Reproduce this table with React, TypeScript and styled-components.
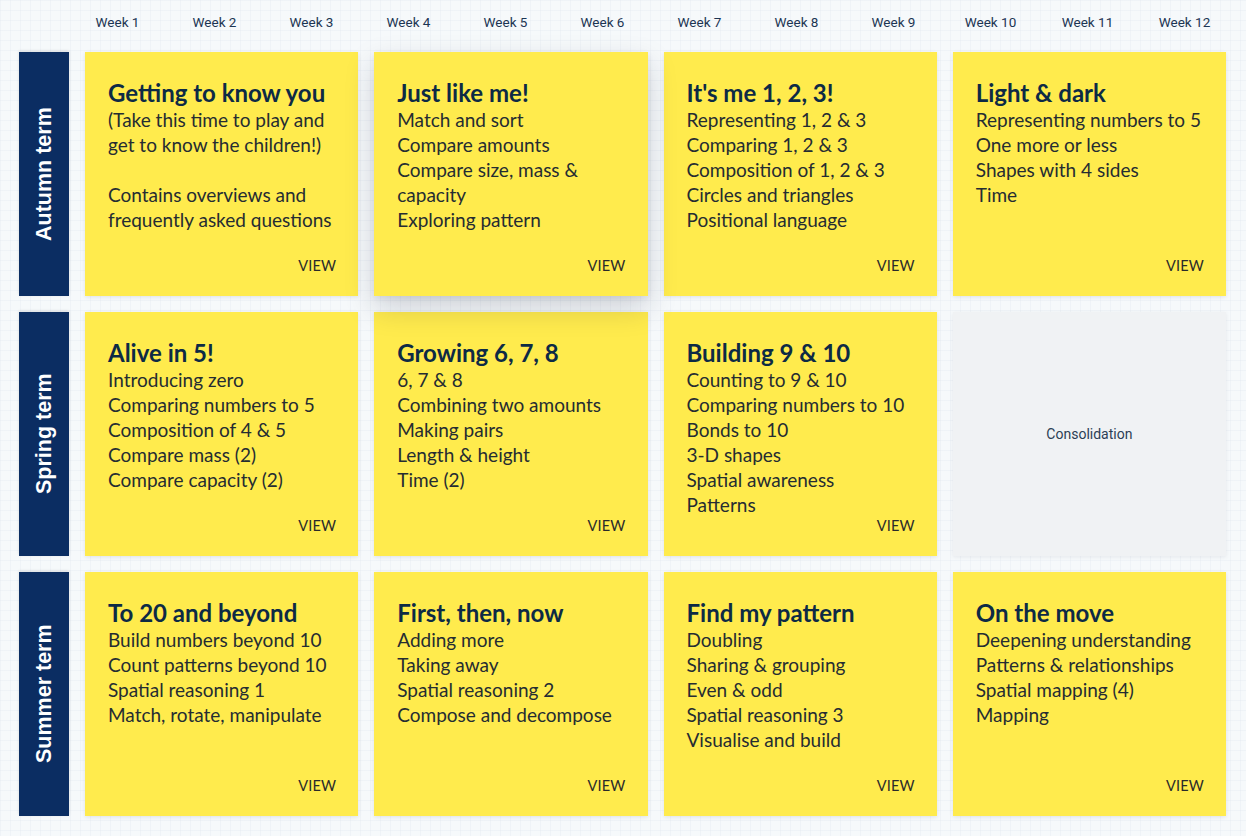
import React from "react";
import styled, { createGlobalStyle } from "styled-components";

const Global = createGlobalStyle`
  html, body { margin: 0; padding: 0; }
  body {
    background-color: #f6f9fb;
    background-image:
      linear-gradient(to right, rgba(214, 224, 234, 0.22) 1px, transparent 1px),
      linear-gradient(to bottom, rgba(214, 224, 234, 0.22) 1px, transparent 1px);
    background-size: 10px 10px;
    font-family: "Lato", "Liberation Sans", sans-serif;
  }
`;

const Page = styled.div`
  width: 1246px;
  height: 836px;
  box-sizing: border-box;
  padding: 0 20px 0 0;
`;

const WeekHeader = styled.div`
  display: grid;
  grid-template-columns: 69px repeat(12, 97px);
  height: 44px;
  align-items: center;
`;

const WeekLabel = styled.div`
  text-align: center;
  font-family: "Roboto", "Liberation Sans", sans-serif;
  font-size: 13.5px;
  color: #1c3553;
`;

const Board = styled.div`
  display: grid;
  grid-template-columns: 50px repeat(4, 1fr);
  grid-auto-rows: 244px;
  gap: 16px;
  padding: 8px 0 0 19px;
`;

const TermLabel = styled.div`
  background: #0b2d62;
  color: #ffffff;
  display: flex;
  align-items: center;
  justify-content: center;
  font-family: "Liberation Sans", "Roboto", sans-serif;
  font-weight: 700;
  font-size: 21.5px;
  writing-mode: vertical-rl;
  transform: rotate(180deg);
  box-shadow: 0 1px 3px rgba(0, 0, 0, 0.12);
`;

const Card = styled.div<{ $raised?: boolean }>`
  background: #ffeb4d;
  display: flex;
  flex-direction: column;
  box-sizing: border-box;
  padding: 27px 22px 21px 23px;
  box-shadow: ${(p) =>
    p.$raised
      ? "0 12px 28px rgba(20, 30, 50, 0.18), 0 2px 6px rgba(20,30,50,0.08)"
      : "0 1px 4px rgba(20, 30, 50, 0.10)"};
  position: relative;
  z-index: ${(p) => (p.$raised ? 2 : 1)};
`;

const Title = styled.div`
  font-family: "Lato", sans-serif;
  font-weight: 700;
  font-size: 24px;
  line-height: 28px;
  color: #0d2a45;
  white-space: nowrap;
`;

const Line = styled.div`
  font-family: "Lato", sans-serif;
  font-weight: 400;
  font-size: 19px;
  line-height: 25px;
  color: #252c32;
  white-space: nowrap;
  min-height: 25px;
`;

const View = styled.div`
  margin-top: auto;
  align-self: flex-end;
  font-family: "Lato", sans-serif;
  font-size: 14.5px;
  line-height: 18px;
  color: #2a2a2a;
  letter-spacing: 0.2px;
`;

const EmptyCard = styled.div`
  background: #f0f2f4;
  display: flex;
  align-items: center;
  justify-content: center;
  font-family: "Roboto", "Liberation Sans", sans-serif;
  font-size: 14px;
  color: #2c3e55;
  box-shadow: 0 1px 4px rgba(20, 30, 50, 0.08);
`;

type Unit = { title?: string; lines?: string[]; raised?: boolean; empty?: string };

const terms: { name: string; units: Unit[] }[] = [
  {
    name: "Autumn term",
    units: [
      {
        title: "Getting to know you",
        lines: [
          "(Take this time to play and",
          "get to know the children!)",
          "",
          "Contains overviews and",
          "frequently asked questions",
        ],
      },
      {
        title: "Just like me!",
        lines: ["Match and sort", "Compare amounts", "Compare size, mass &", "capacity", "Exploring pattern"],
        raised: true,
      },
      {
        title: "It's me 1, 2, 3!",
        lines: [
          "Representing 1, 2 & 3",
          "Comparing 1, 2 & 3",
          "Composition of 1, 2 & 3",
          "Circles and triangles",
          "Positional language",
        ],
      },
      {
        title: "Light & dark",
        lines: ["Representing numbers to 5", "One more or less", "Shapes with 4 sides", "Time"],
      },
    ],
  },
  {
    name: "Spring term",
    units: [
      {
        title: "Alive in 5!",
        lines: [
          "Introducing zero",
          "Comparing numbers to 5",
          "Composition of 4 & 5",
          "Compare mass (2)",
          "Compare capacity (2)",
        ],
      },
      {
        title: "Growing 6, 7, 8",
        lines: ["6, 7 & 8", "Combining two amounts", "Making pairs", "Length & height", "Time (2)"],
      },
      {
        title: "Building 9 & 10",
        lines: [
          "Counting to 9 & 10",
          "Comparing numbers to 10",
          "Bonds to 10",
          "3-D shapes",
          "Spatial awareness",
          "Patterns",
        ],
      },
      { empty: "Consolidation" },
    ],
  },
  {
    name: "Summer term",
    units: [
      {
        title: "To 20 and beyond",
        lines: [
          "Build numbers beyond 10",
          "Count patterns beyond 10",
          "Spatial reasoning 1",
          "Match, rotate, manipulate",
        ],
      },
      {
        title: "First, then, now",
        lines: ["Adding more", "Taking away", "Spatial reasoning 2", "Compose and decompose"],
      },
      {
        title: "Find my pattern",
        lines: ["Doubling", "Sharing & grouping", "Even & odd", "Spatial reasoning 3", "Visualise and build"],
      },
      {
        title: "On the move",
        lines: ["Deepening understanding", "Patterns & relationships", "Spatial mapping (4)", "Mapping"],
      },
    ],
  },
];

export default function App() {
  return (
    <Page>
      <Global />
      <WeekHeader>
        <div />
        {Array.from({ length: 12 }, (_, i) => (
          <WeekLabel key={i}>Week {i + 1}</WeekLabel>
        ))}
      </WeekHeader>
      <Board>
        {terms.map((t) => (
          <React.Fragment key={t.name}>
            <TermLabel>{t.name}</TermLabel>
            {t.units.map((u, i) =>
              u.empty ? (
                <EmptyCard key={i}>{u.empty}</EmptyCard>
              ) : (
                <Card key={i} $raised={u.raised}>
                  <Title>{u.title}</Title>
                  {u.lines!.map((l, j) => (
                    <Line key={j}>{l}</Line>
                  ))}
                  <View>VIEW</View>
                </Card>
              )
            )}
          </React.Fragment>
        ))}
      </Board>
    </Page>
  );
}
